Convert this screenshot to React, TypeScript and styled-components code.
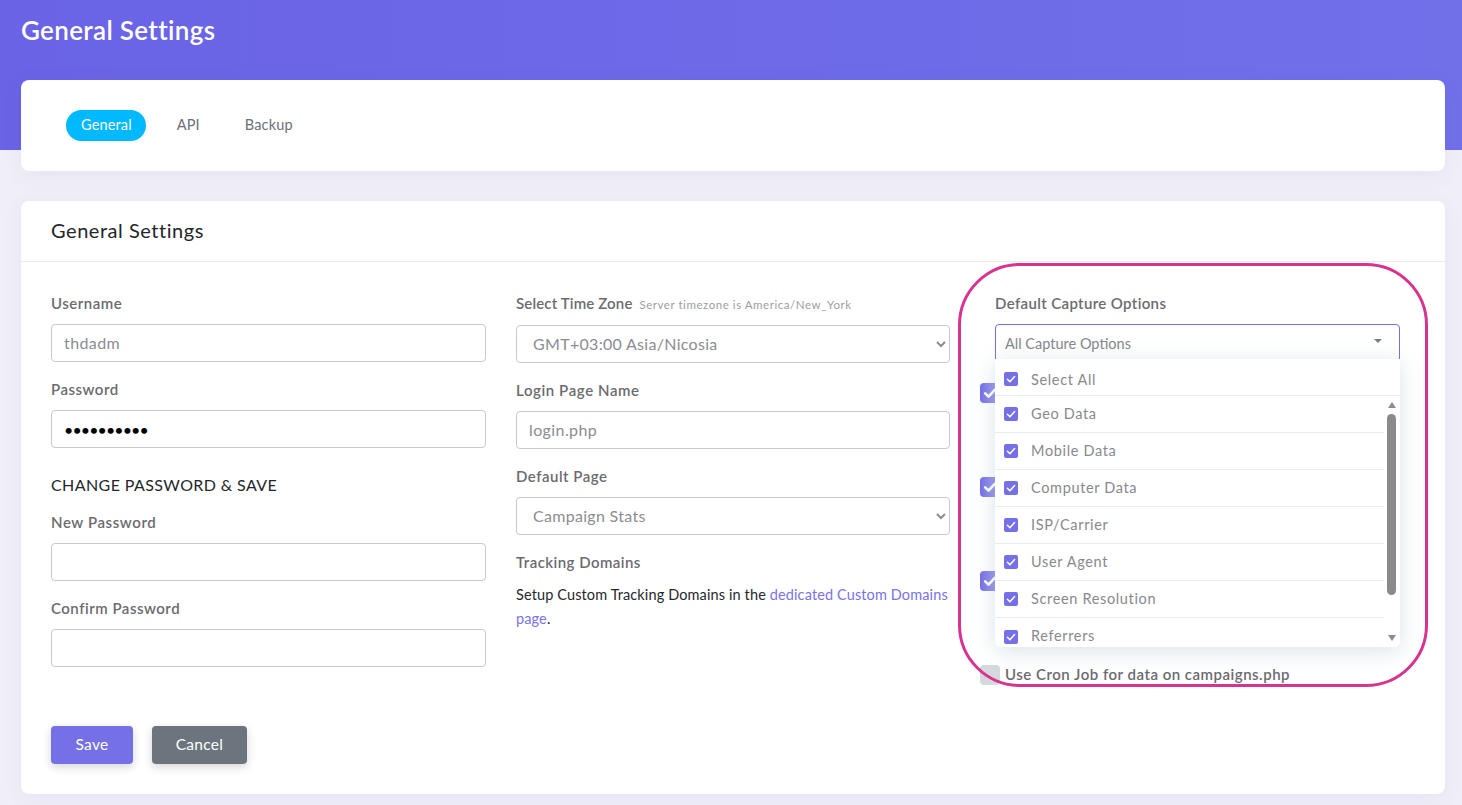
import React from "react";
import styled, { createGlobalStyle } from "styled-components";

const FONT = `"Lato", "Open Sans", "Liberation Sans", sans-serif`;

const Global = createGlobalStyle`
  html, body { margin: 0; padding: 0; height: 805px; overflow: hidden; background: #f0eff8; }
  * { box-sizing: border-box; }
  body { font-family: ${FONT}; }
`;

const Banner = styled.header`
  height: 150px;
  padding: 15px 21px 0;
  background: linear-gradient(90deg, #6a63e6 0%, #7170e9 100%);
`;
const PageTitle = styled.h1`
  margin: 0;
  font-size: 26px;
  line-height: 30px;
  font-weight: 600;
  color: #fff;
  letter-spacing: 0.33px;
`;
const Content = styled.main`
  margin-top: -70px;
  padding: 0 17px 0 21px;
  display: flex;
  flex-direction: column;
  gap: 30px;
`;
const Card = styled.section`
  position: relative;
  background: #fff;
  border-radius: 8px;
  box-shadow: 0 4px 20px rgba(90, 85, 170, 0.08);
`;
const TabBar = styled.nav`
  display: flex;
  align-items: center;
  height: 91px;
  padding: 0 45px;
  gap: 15px;
`;
const Tab = styled.a<{ $active?: boolean }>`
  display: block;
  height: 31px;
  line-height: 30px;
  padding: ${(p) => (p.$active ? "0 14px 0 15px" : "0 15px")};
  margin-right: ${(p) => (p.$active ? "1px" : "0")};
  border-radius: 16px;
  font-size: 14.5px;
  letter-spacing: 0.15px;
  color: ${(p) => (p.$active ? "#fff" : "#6c7079")};
  background: ${(p) => (p.$active ? "#00b9fe" : "transparent")};
`;
const CardHead = styled.div`
  height: 61px;
  padding: 0 30px 2px;
  display: flex;
  align-items: center;
  border-bottom: 1px solid #e9e9ef;
`;
const CardTitle = styled.h2`
  margin: 0;
  font-size: 20px;
  font-weight: 400;
  color: #24262b;
  letter-spacing: 0.54px;
`;
const CardBody = styled.div`
  padding: 30px;
  height: 532px;
`;
const Columns = styled.div`
  display: grid;
  grid-template-columns: 435px 434px 435px;
  column-gap: 30px;
  height: 434px;
`;
const Column = styled.div`
  display: flex;
  flex-direction: column;
`;
const Group = styled.div`
  display: flex;
  flex-direction: column;
  margin-bottom: 16px;
`;
const Label = styled.label<{ $compact?: boolean; $tracking?: number }>`
  display: block;
  line-height: 22px;
  margin-bottom: ${(p) => (p.$compact ? "9px" : "10px")};
  font-size: 15px;
  font-weight: 600;
  color: #6b6b70;
  letter-spacing: ${(p) => p.$tracking ?? 0.5}px;
  white-space: nowrap;
`;
const Note = styled.small`
  margin-left: 3px;
  font-size: 11.5px;
  font-weight: 400;
  color: #9d9da3;
  letter-spacing: 0.55px;
`;
const Input = styled.input`
  display: block;
  width: 100%;
  height: 38px;
  padding: 0 12px 2px;
  border: 1px solid #c9c9cc;
  border-radius: 4px;
  background: #fff;
  font-family: ${FONT};
  font-size: 16px;
  color: #8b8d92;
  outline: none;
  letter-spacing: 0.4px;
`;
const PasswordInput = styled(Input)`
  color: #000;
  letter-spacing: -0.9px;
  padding-bottom: 0;
`;
const Select = styled.select`
  display: block;
  width: 100%;
  height: 38px;
  padding: 0 12px 2px;
  border: 1px solid #c9c9cc;
  border-radius: 4px;
  background: #fff;
  font-family: ${FONT};
  font-size: 16px;
  color: #8b8d92;
  outline: none;
  letter-spacing: 0.3px;
`;
const SectionHeading = styled.h3`
  margin: 9px 0 14px;
  font-size: 16px;
  line-height: 24px;
  font-weight: 400;
  color: #24262b;
  letter-spacing: 0.4px;
`;
const Paragraph = styled.p`
  margin: 0;
  font-size: 14.5px;
  line-height: 24px;
  color: #26282d;
  letter-spacing: 0.12px;
`;
const TextLink = styled.a`
  color: #7a72e8;
`;
const Capture = styled(Column)`
  padding-right: 15px;
`;
const CaptureField = styled.div`
  padding-left: 15px;
  margin-bottom: 21px;
`;
const MultiSelect = styled.div`
  position: relative;
`;
const MultiTrigger = styled.div`
  height: 38px;
  padding: 0 9px;
  display: flex;
  align-items: center;
  justify-content: space-between;
  border: 1px solid #7570e6;
  border-radius: 4px;
  font-size: 14.5px;
  color: #85878c;
`;
const Caret = styled.span`
  width: 0;
  height: 0;
  margin: -5px 8px 0 0;
  border-left: 4.5px solid transparent;
  border-right: 4.5px solid transparent;
  border-top: 4.5px solid #7d7d80;
`;
const Dropdown = styled.div`
  position: absolute;
  z-index: 2;
  top: 35px;
  left: 0;
  right: 0;
  height: 288px;
  background: #fff;
  border-radius: 0 0 5px 5px;
  box-shadow: 0 4px 22px rgba(70, 120, 140, 0.2);
  overflow: hidden;
`;
const OptionRow = styled.div<{ $head?: boolean }>`
  height: 37px;
  flex: none;
  display: flex;
  align-items: center;
  gap: 13px;
  padding: ${(p) => (p.$head ? "3px 0 0 9px" : "0 0 0 9px")};
  border-bottom: 1px solid #e9ebef;
  font-size: 14.5px;
  letter-spacing: 0.65px;
  color: #88898d;
  &:last-child { border-bottom: none; }
`;
const OptionText = styled.span<{ $head?: boolean }>`
  padding: ${(p) => (p.$head ? "2px 0 0" : "0 0 2px")};
`;
const ScrollArea = styled.div`
  display: flex;
  height: 251px;
`;
const OptionList = styled.div`
  flex: 1;
  min-width: 0;
  overflow: hidden;
  display: flex;
  flex-direction: column;
`;
const Track = styled.div`
  width: 16px;
  padding: 6px 3px 0 2px;
  display: flex;
  flex-direction: column;
  align-items: center;
`;
const ArrowUp = styled.span`
  flex: none;
  border-left: 4.5px solid transparent;
  border-right: 4.5px solid transparent;
  border-bottom: 6px solid #8a8a8a;
`;
const ArrowDown = styled.span`
  flex: none;
  margin-top: 40px;
  border-left: 4.5px solid transparent;
  border-right: 4.5px solid transparent;
  border-top: 6px solid #8a8a8a;
`;
const Thumb = styled.span`
  flex: none;
  width: 9px;
  height: 181px;
  margin-top: 6px;
  border-radius: 5px;
  background: #8a8a8a;
`;
const MiniCheck = styled.span`
  flex: none;
  width: 14px;
  height: 14px;
  border-radius: 2px;
  background: #7570e6;
  display: flex;
  align-items: center;
  justify-content: center;
`;
const SwitchList = styled.div`
  display: flex;
  flex-direction: column;
  gap: 74px;
`;
const SwitchRow = styled.div`
  display: flex;
  align-items: center;
  height: 20px;
  gap: 5px;
  font-size: 15px;
  font-weight: 600;
  color: #6b6b70;
  letter-spacing: 0.5px;
  white-space: nowrap;
`;
const SwitchText = styled.span`
  padding-bottom: 2px;
`;
const SwitchBox = styled.span<{ $on?: boolean }>`
  flex: none;
  width: 20px;
  height: 20px;
  border-radius: 4px;
  display: flex;
  align-items: center;
  justify-content: center;
  background: ${(p) => (p.$on ? "linear-gradient(90deg, #7570e6 0%, #aeabf0 100%)" : "#d5d9dc")};
`;
const Actions = styled.div`
  display: flex;
  gap: 19px;
`;
const Button = styled.button<{ $tone: "primary" | "muted" }>`
  width: ${(p) => (p.$tone === "primary" ? "82px" : "95px")};
  height: 38px;
  padding: 0 0 2px;
  border: none;
  border-radius: 4px;
  font-family: ${FONT};
  font-size: 15.5px;
  letter-spacing: 0.3px;
  color: #fff;
  background: ${(p) => (p.$tone === "primary" ? "#7570e6" : "#6c757d")};
  box-shadow: 0 3px 8px rgba(60, 60, 90, 0.22);
`;
const Highlight = styled.div`
  position: absolute;
  z-index: 3;
  left: 937px;
  top: 62px;
  width: 470px;
  height: 424px;
  border: 3.5px solid #d6348f;
  border-radius: 62px;
  pointer-events: none;
`;

const Tick = ({ size, width }: { size: number; width: number }) => (
  <svg width={size} height={size} viewBox="0 0 12 12" fill="none">
    <path d="M2.4 6.3 L4.9 8.7 L9.6 3.6" stroke="#fff" strokeWidth={width} strokeLinecap="round" strokeLinejoin="round" />
  </svg>
);

const OPTIONS = ["Geo Data", "Mobile Data", "Computer Data", "ISP/Carrier", "User Agent", "Screen Resolution", "Referrers"];

export default function App() {
  return (
    <>
      <Global />
      <Banner>
        <PageTitle>General Settings</PageTitle>
      </Banner>
      <Content>
        <Card>
          <TabBar>
            <Tab $active>General</Tab>
            <Tab>API</Tab>
            <Tab>Backup</Tab>
          </TabBar>
        </Card>
        <Card>
          <CardHead>
            <CardTitle>General Settings</CardTitle>
          </CardHead>
          <CardBody>
            <Columns>
              <Column>
                <Group>
                  <Label>Username</Label>
                  <Input defaultValue="thdadm" />
                </Group>
                <Group>
                  <Label>Password</Label>
                  <PasswordInput type="password" defaultValue="thdadmpass" />
                </Group>
                <SectionHeading>CHANGE PASSWORD &amp; SAVE</SectionHeading>
                <Group>
                  <Label $tracking={0.6}>New Password</Label>
                  <Input />
                </Group>
                <Group>
                  <Label>Confirm Password</Label>
                  <Input />
                </Group>
              </Column>
              <Column>
                <Group>
                  <Label $compact $tracking={0.15}>
                    Select Time Zone <Note>Server timezone is America/New_York</Note>
                  </Label>
                  <Select defaultValue="nicosia">
                    <option value="nicosia">GMT+03:00 Asia/Nicosia</option>
                  </Select>
                </Group>
                <Group>
                  <Label $tracking={0.6}>Login Page Name</Label>
                  <Input defaultValue="login.php" />
                </Group>
                <Group>
                  <Label>Default Page</Label>
                  <Select defaultValue="stats">
                    <option value="stats">Campaign Stats</option>
                  </Select>
                </Group>
                <Label $tracking={0.45}>Tracking Domains</Label>
                <Paragraph>
                  Setup Custom Tracking Domains in the <TextLink>dedicated Custom Domains page</TextLink>.
                </Paragraph>
              </Column>
              <Capture>
                <CaptureField>
                  <Label $tracking={0.36}>Default Capture Options</Label>
                  <MultiSelect>
                    <MultiTrigger>
                      All Capture Options
                      <Caret />
                    </MultiTrigger>
                    <Dropdown>
                      <OptionRow $head>
                        <MiniCheck><Tick size={12} width={1.5} /></MiniCheck>
                        <OptionText $head>Select All</OptionText>
                      </OptionRow>
                      <ScrollArea>
                        <OptionList>
                          {OPTIONS.map((o) => (
                            <OptionRow key={o}>
                              <MiniCheck><Tick size={12} width={1.5} /></MiniCheck>
                              <OptionText>{o}</OptionText>
                            </OptionRow>
                          ))}
                        </OptionList>
                        <Track>
                          <ArrowUp />
                          <Thumb />
                          <ArrowDown />
                        </Track>
                      </ScrollArea>
                    </Dropdown>
                  </MultiSelect>
                </CaptureField>
                <SwitchList>
                  <SwitchRow><SwitchBox $on><Tick size={16} width={2} /></SwitchBox></SwitchRow>
                  <SwitchRow><SwitchBox $on><Tick size={16} width={2} /></SwitchBox></SwitchRow>
                  <SwitchRow><SwitchBox $on><Tick size={16} width={2} /></SwitchBox></SwitchRow>
                  <SwitchRow><SwitchBox /><SwitchText>Use Cron Job for data on campaigns.php</SwitchText></SwitchRow>
                </SwitchList>
              </Capture>
            </Columns>
            <Actions>
              <Button $tone="primary">Save</Button>
              <Button $tone="muted">Cancel</Button>
            </Actions>
          </CardBody>
          <Highlight />
        </Card>
      </Content>
    </>
  );
}
